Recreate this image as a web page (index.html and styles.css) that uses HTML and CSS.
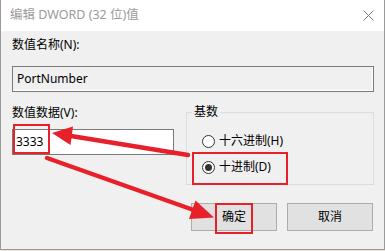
FILE: index.html
```html
<!DOCTYPE html>
<html lang="zh-CN">
<head>
<meta charset="utf-8">
<title>编辑 DWORD (32 位)值</title>
<link rel="stylesheet" href="styles.css">
</head>
<body>
<div class="window">
  <div class="titlebar">
    <span class="title">编辑 DWORD (32 位)值</span>
    <span class="close">
      <svg width="11" height="11" viewBox="0 0 11 11"><path d="M0.5 0.5L10.5 10.5M10.5 0.5L0.5 10.5" stroke="#7a7a7a" stroke-width="1" fill="none"/></svg>
    </span>
  </div>
  <div class="content">
    <div class="label first">数值名称(N):</div>
    <div class="field readonly">PortNumber</div>
    <div class="row">
      <div class="col-left">
        <div class="label second">数值数据(V):</div>
        <div class="field value">3333</div>
      </div>
      <fieldset class="group">
        <legend>基数</legend>
        <div class="radio"><span class="dot"></span><span>十六进制(H)</span></div>
        <div class="radio"><span class="dot checked"></span><span>十进制(D)</span></div>
      </fieldset>
    </div>
    <div class="buttons">
      <div class="btn">确定</div>
      <div class="btn">取消</div>
    </div>
  </div>
  <svg class="overlay" width="385" height="251" viewBox="0 0 385 251">
    <g fill="none" stroke="#e8202a" stroke-width="2">
      <rect x="14" y="125" width="35" height="28"/>
      <rect x="193" y="153" width="94" height="31"/>
      <rect x="216" y="204" width="36" height="29"/>
    </g>
    <g stroke="#e8202a" stroke-width="4.5" stroke-linecap="round">
      <line x1="188" y1="155" x2="68" y2="135.5"/>
      <line x1="47" y1="158" x2="195" y2="210.5"/>
    </g>
    <g fill="#e8202a">
      <polygon points="52,133 73,126.5 70.5,145"/>
      <polygon points="214,217.5 195.5,200.5 189,219"/>
    </g>
  </svg>
</div>
</body>
</html>
```

FILE: styles.css
```css
* { box-sizing: border-box; }
html, body { margin: 0; padding: 0; }
body {
  width: 385px;
  height: 251px;
  background: #e9e4d8;
  font-family: "Noto Sans", "Noto Sans CJK SC", sans-serif;
  font-size: 12px;
  color: #000;
  overflow: hidden;
}
.window {
  position: relative;
  width: 385px;
  height: 250px;
  background: #f0f0f0;
  border: 1px solid #9a9a9a;
  border-top: none;
}
.titlebar {
  height: 31px;
  background: #fff;
  display: flex;
  align-items: center;
  justify-content: space-between;
  padding: 0 10px 1px 9px;
}
.title {
  color: #9b9b9b;
  font-size: 12.5px;
  line-height: 16px;
}
.close {
  display: flex;
  width: 11px;
  height: 11px;
}
.content {
  padding: 0 10px 0 11px;
}
.label {
  line-height: 16px;
  height: 16px;
}
.label.first { margin-top: 6px; }
.field {
  border: 1px solid #7a7a7a;
  height: 26px;
  line-height: 24px;
  padding-left: 4px;
}
.field.readonly {
  margin-top: 13px;
  background: #f0f0f0;
  box-shadow: inset -1px -1px 0 #fff;
}
.row {
  display: grid;
  grid-template-columns: 162px 188px;
  column-gap: 12px;
  margin-top: 12px;
}
.label.second { margin-top: 1px; }
.field.value {
  margin-top: 8px;
  background: #fff;
  padding-left: 3px;
}
.group {
  margin: 0;
  padding: 0 0 0 15px;
  border: 1px solid #dcdcdc;
  height: 81px;
  min-width: 0;
}
.group legend {
  padding: 0 2px;
  margin-left: -10px;
  line-height: 16px;
}
.radio {
  display: flex;
  align-items: center;
  gap: 4px;
  height: 16px;
  line-height: 16px;
}
.radio:first-of-type { margin-top: 13px; }
.radio + .radio { margin-top: 10px; }
.dot {
  width: 13px;
  height: 13px;
  border: 1px solid #333;
  border-radius: 50%;
  background: #fff;
  display: flex;
  align-items: center;
  justify-content: center;
}
.dot.checked::after {
  content: "";
  width: 7px;
  height: 7px;
  border-radius: 50%;
  background: #333;
}
.buttons {
  display: flex;
  justify-content: flex-end;
  gap: 10px;
  margin-top: 18px;
  padding-right: 1px;
}
.btn {
  width: 86px;
  height: 28px;
  background: #e1e1e1;
  border: 1px solid #adadad;
  text-align: center;
  line-height: 26px;
}
.overlay {
  position: absolute;
  left: -1px;
  top: 0;
  pointer-events: none;
}
```
